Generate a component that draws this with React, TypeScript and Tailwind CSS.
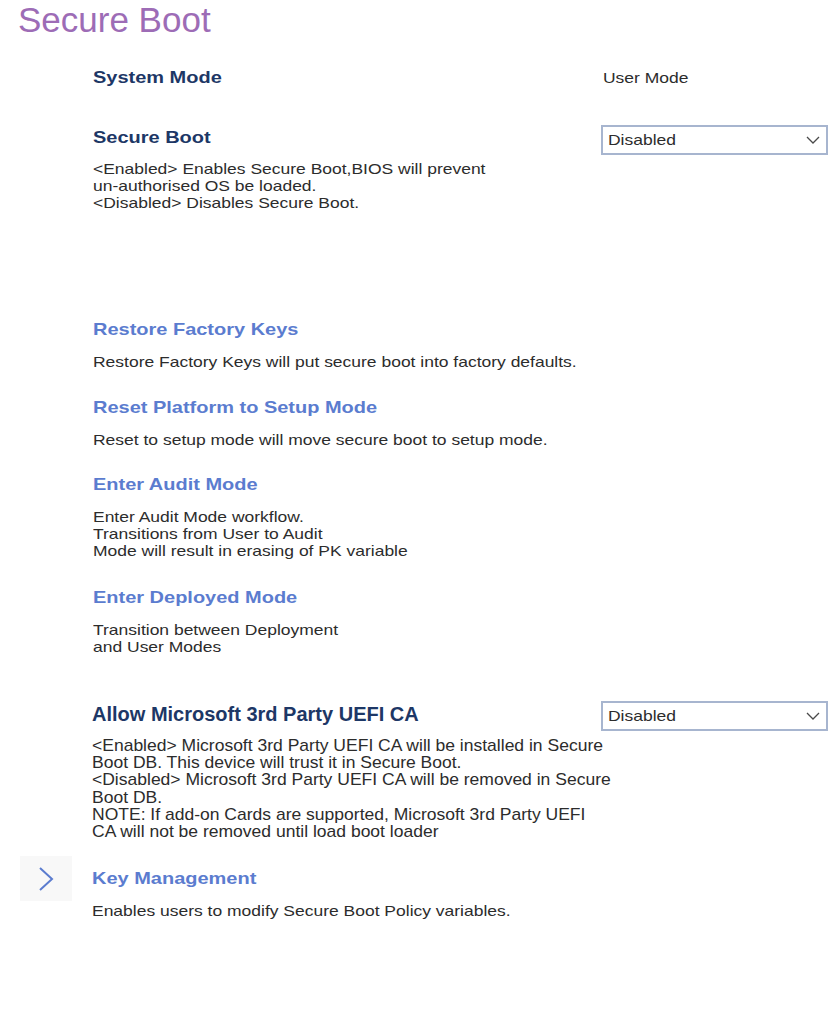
import React from "react";

/* Secure Boot settings page — BIOS setup style */

const navyHead =
  "w-fit h-6 leading-6 text-[17px] font-bold text-[#1d3766] origin-left scale-x-[1.175] whitespace-nowrap";
const blueHead =
  "w-fit h-6 leading-6 text-[17px] font-bold text-[#5b7ccf] origin-left scale-x-[1.175] whitespace-nowrap";
const desc =
  "w-fit text-[15px] leading-[17px] text-[#2c2c2c] origin-left scale-x-[1.165] whitespace-nowrap";

function Dropdown({ value }: { value: string }) {
  return (
    <div className="w-[227px] h-[30px] border-2 border-[#a7b5cf] bg-white flex items-center justify-between pl-[5px] pr-[6px]">
      <span className="inline-block text-[15px] text-[#2c2c2c] origin-left scale-x-[1.165]">{value}</span>
      <svg width="14" height="8" viewBox="0 0 14 8" fill="none">
        <polyline points="1,1 7,7 13,1" stroke="#4a4a4a" strokeWidth="1.3" />
      </svg>
    </div>
  );
}

function Action({ title, lines, className }: { title: string; lines: string[]; className: string }) {
  return (
    <div className={className}>
      <div className={blueHead}>{title}</div>
      <div className={`mt-[11px] ${desc}`}>
        {lines.map((l) => (
          <div key={l}>{l}</div>
        ))}
      </div>
    </div>
  );
}

export default function App() {
  return (
    <div className="w-[840px] min-h-[1022px] bg-white overflow-hidden font-['Liberation_Sans',Arial,sans-serif]">
      {/* Page title */}
      <div className="h-9 leading-[39px] pl-[18px] text-[35px] text-[#9d6cb6]">Secure Boot</div>

      <div className="ml-[93px] w-[735px]">
        {/* System Mode */}
        <div className="mt-[30px] h-6 flex items-center justify-between">
          <div className={navyHead}>System Mode</div>
          <div className="w-[227px] pl-[2px]">
            <span className="inline-block text-[15px] text-[#2c2c2c] origin-left scale-x-[1.165]">User Mode</span>
          </div>
        </div>

        {/* Secure Boot */}
        <div className="mt-[35px] flex items-start justify-between">
          <div>
            <div className={`mt-px ${navyHead}`}>Secure Boot</div>
            <div className={`mt-[10px] ${desc}`}>
              <div>&lt;Enabled&gt; Enables Secure Boot,BIOS will prevent</div>
              <div>un-authorised OS be loaded.</div>
              <div>&lt;Disabled&gt; Disables Secure Boot.</div>
            </div>
          </div>
          <Dropdown value="Disabled" />
        </div>

        <Action
          className="mt-[107px]"
          title="Restore Factory Keys"
          lines={["Restore Factory Keys will put secure boot into factory defaults."]}
        />
        <Action
          className="mt-[26px]"
          title="Reset Platform to Setup Mode"
          lines={["Reset to setup mode will move secure boot to setup mode."]}
        />
        <Action
          className="mt-[25px]"
          title="Enter Audit Mode"
          lines={[
            "Enter Audit Mode workflow.",
            "Transitions from User to Audit",
            "Mode will result in erasing of PK variable",
          ]}
        />
        <Action
          className="mt-[27px]"
          title="Enter Deployed Mode"
          lines={["Transition between Deployment", "and User Modes"]}
        />

        {/* Microsoft 3rd party CA */}
        <div className="mt-[46px] flex items-start justify-between">
          <div className="-ml-px">
            <div className="h-[26px] leading-[26px] text-[20px] font-bold text-[#1d3766] whitespace-nowrap">
              Allow Microsoft 3rd Party UEFI CA
            </div>
            <div className="mt-[10px] w-fit text-[17px] leading-[17.2px] text-[#2c2c2c] origin-left scale-x-[1.03] whitespace-nowrap">
              <div>&lt;Enabled&gt; Microsoft 3rd Party UEFI CA will be installed in Secure</div>
              <div>Boot DB. This device will trust it in Secure Boot.</div>
              <div>&lt;Disabled&gt; Microsoft 3rd Party UEFI CA will be removed in Secure</div>
              <div>Boot DB.</div>
              <div>NOTE: If add-on Cards are supported, Microsoft 3rd Party UEFI</div>
              <div>CA will not be removed until load boot loader</div>
            </div>
          </div>
          <Dropdown value="Disabled" />
        </div>
      </div>

      {/* Key Management (submenu) */}
      <div className="mt-[16px] ml-[20px] flex items-start">
        <div className="w-[52px] h-[45px] bg-[#f8f8f8] flex items-center justify-center">
          <svg width="18" height="26" viewBox="0 0 18 26" fill="none">
            <polyline points="3,2 15,13 3,24" stroke="#5b7ccf" strokeWidth="2" />
          </svg>
        </div>
        <Action
          className="ml-[20px] mt-[11px]"
          title="Key Management"
          lines={["Enables users to modify Secure Boot Policy variables."]}
        />
      </div>
    </div>
  );
}
